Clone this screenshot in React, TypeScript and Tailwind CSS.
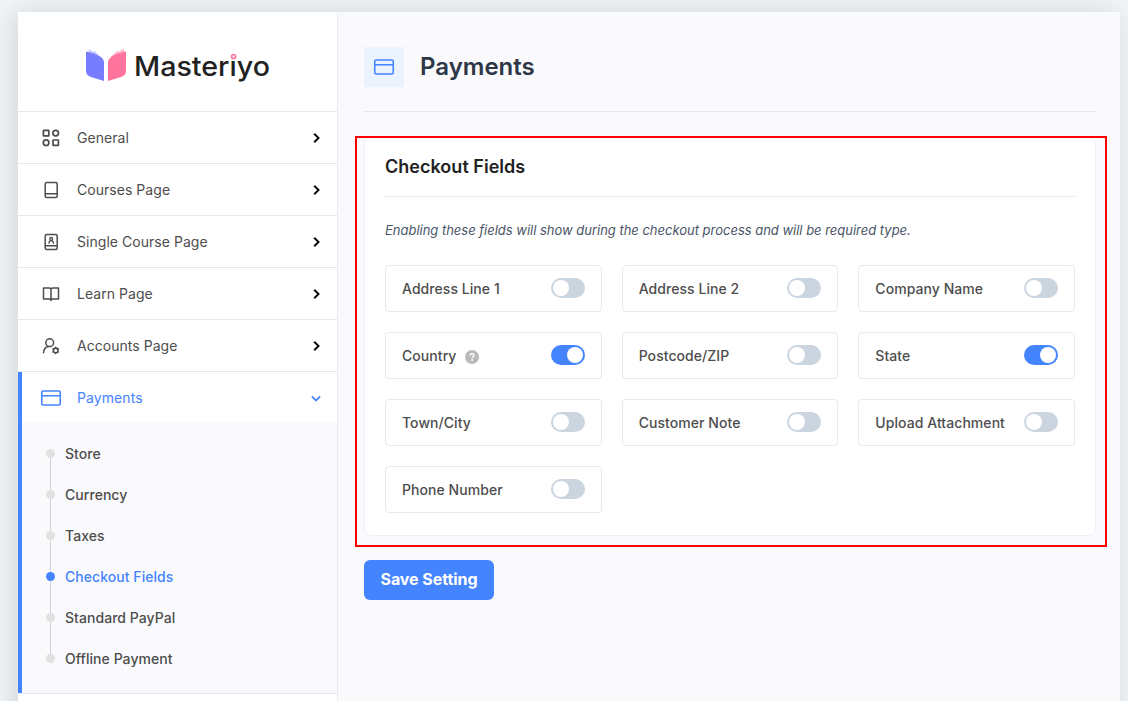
import React, { useState } from "react";

const stroke = {
  fill: "none",
  stroke: "currentColor",
  strokeLinecap: "round" as const,
  strokeLinejoin: "round" as const,
};

function GridIcon() {
  return (
    <svg width="20" height="20" viewBox="0 0 20 20" {...stroke} strokeWidth="1.7">
      <rect x="2.4" y="2.4" width="5.4" height="5.4" rx=".4" />
      <circle cx="14.7" cy="5.1" r="2.8" />
      <circle cx="5.1" cy="14.7" r="2.8" />
      <rect x="12" y="12" width="5.4" height="5.4" rx=".4" />
    </svg>
  );
}

function BookIcon() {
  return (
    <svg width="20" height="20" viewBox="0 0 20 20" {...stroke} strokeWidth="1.5">
      <rect x="4.2" y="2.6" width="12" height="14.8" rx="1.5" />
      <path d="M4.6 13.8H16" />
    </svg>
  );
}

function BookUserIcon() {
  return (
    <svg width="20" height="20" viewBox="0 0 20 20" {...stroke} strokeWidth="1.5">
      <rect x="4.2" y="2.6" width="12" height="14.8" rx="1.5" />
      <path d="M4.6 13.8H16" />
      <circle cx="10.2" cy="6.9" r="1.4" strokeWidth="1.3" />
      <path d="M7.9 11.2c.2-1.8 1-2.6 2.3-2.6s2.1.8 2.3 2.6" strokeWidth="1.3" />
    </svg>
  );
}

function OpenBookIcon() {
  return (
    <svg width="20" height="20" viewBox="0 0 20 20" {...stroke} strokeWidth="1.5">
      <path d="M2.5 4H8q2 0 2 1.500Q10 4 12 4h5.500v11H12q-2 0-2 1.400Q10 15 8 15H2.500zM10 5.500v11" />
    </svg>
  );
}

function UserCogIcon() {
  return (
    <svg width="20" height="20" viewBox="0 0 20 20" {...stroke} strokeWidth="1.5">
      <circle cx="8.7" cy="6.7" r="3.9" />
      <path d="M2.600 16.800c.2-3.600 2-5.800 5-6.200" />
      <circle cx="14.7" cy="14.4" r="2.3" strokeWidth="1.6" />
      <path
        d="M14.700 11.200v.5M14.700 17.100v.5M11.900 12.800l.4.2M17.100 15.800l.4.2M11.900 16l.4-.2M17.100 13l.4-.2"
        strokeWidth="1.3"
      />
    </svg>
  );
}

function CardIcon() {
  return (
    <svg width="22" height="18" viewBox="0 0 22 18" {...stroke} strokeWidth="1.6">
      <rect x="1.75" y="2" width="18.5" height="14" rx="1.5" />
      <path d="M2 6.800h18" />
    </svg>
  );
}

function ChevronRight() {
  return (
    <svg width="20" height="20" viewBox="0 0 24 24" fill="#000" stroke="#000" strokeWidth=".4">
      <path d="M10.707 17.707 16.414 12l-5.707-5.707-1.414 1.414L13.586 12l-4.293 4.293z" />
    </svg>
  );
}

function ChevronDown() {
  return (
    <svg width="20" height="20" viewBox="0 0 24 24" fill="currentColor">
      <path d="M16.293 9.293 12 13.586 7.707 9.293l-1.414 1.414L12 16.414l5.707-5.707z" />
    </svg>
  );
}

function HelpIcon() {
  return (
    <svg width="14" height="14" viewBox="0 0 14 14" className="ml-[9px] mt-0.5">
      <circle cx="7" cy="7" r="7" fill="#b9b9b9" />
      <path
        d="M5.100 5.600c0-1.100.8-1.800 1.900-1.800s1.900.7 1.900 1.700c0 1.200-1.700 1.300-1.700 2.600"
        fill="none"
        stroke="#fff"
        strokeWidth="1.5"
      />
      <circle cx="7.1" cy="10.1" r="1" fill="#fff" />
    </svg>
  );
}

function Logo() {
  return (
    <svg width="190" height="40" viewBox="0 0 190 40" role="img" aria-label="Masteriyo">
      <path d="M4 6.500 3.500 3 9 6.500 8.500 4 15 10.500V14z" fill="#c3c5ff" />
      <path d="M40 6.500 38.500 2.800 33 6.500 33.500 4 26 10.500V14z" fill="#ffb3cb" />
      <path d="M1 5.500Q10 7 15 10.500Q19 13 19 16.500V35L6 31Q1 29.300 1 25z" fill="#787cff" />
      <path d="M41 5.500Q33 7 27 10.500Q23 13 23 16.500V35L36 31Q41 29.300 41 25z" fill="#ff739c" />
      <text
        x="49"
        y="29.5"
        fontSize="27"
        fontWeight="500"
        fill="#222"
        textLength="136"
        lengthAdjust="spacingAndGlyphs"
        fontFamily="Inter, sans-serif"
      >
        Masterıyo
      </text>
      <circle cx="148.6" cy="10.5" r="2" fill="#fff" stroke="#ff739c" strokeWidth="1.7" />
    </svg>
  );
}

const menu = [
  { label: "General", icon: <GridIcon /> },
  { label: "Courses Page", icon: <BookIcon /> },
  { label: "Single Course Page", icon: <BookUserIcon /> },
  { label: "Learn Page", icon: <OpenBookIcon /> },
  { label: "Accounts Page", icon: <UserCogIcon /> },
];

const submenu = ["Store", "Currency", "Taxes", "Checkout Fields", "Standard PayPal", "Offline Payment"];

function Sidebar() {
  return (
    <aside className="flex w-80 shrink-0 flex-col border-r border-[#ebecf2] bg-white">
      <div className="flex h-[100px] items-center border-b border-[#e2e8f0] pl-[67px] pt-[9px]">
        <Logo />
      </div>
      {menu.map((item) => (
        <div
          key={item.label}
          className="flex h-[52px] items-center border-b border-[#e2e8f0] pl-[23px] pr-[11px] text-[#4d4d4d]"
        >
          {item.icon}
          <span className="ml-4 flex-1 text-sm leading-5 tracking-[0.04px]">{item.label}</span>
          <ChevronRight />
        </div>
      ))}
      <div className="h-[322px] border-b border-[#e2e8f0]">
        <div className="h-full border-l-4 border-[#4584ff]">
          <div className="flex h-[51px] items-center pl-[18px] pr-[11px] text-[#4584ff]">
            <CardIcon />
            <span className="ml-[15px] flex-1 text-sm leading-5 tracking-[0.08px]">Payments</span>
            <ChevronDown />
          </div>
          <ul className="h-[270px] bg-[#fafafc] pl-6 pt-[10px]">
            {submenu.map((label, i) => {
              const active = label === "Checkout Fields";
              return (
                <li key={label} className="flex h-[41px] items-center">
                  <div className="flex h-full w-[9px] flex-col items-center">
                    <span className={i === 0 ? "w-px flex-1" : "w-px flex-1 bg-[#cbd5e0]"} />
                    <span
                      className={
                        active ? "size-[9px] rounded-full bg-[#4584ff]" : "size-[9px] rounded-full bg-[#e1e1e1]"
                      }
                    />
                    <span className={i === submenu.length - 1 ? "w-px flex-1" : "w-px flex-1 bg-[#cbd5e0]"} />
                  </div>
                  <span
                    className={
                      active
                        ? "ml-[10px] text-sm font-[550] leading-5 tracking-[0.05px] text-[#4584ff]"
                        : "ml-[10px] text-sm font-[550] leading-5 tracking-[0.05px] text-[#4d4d4d]"
                    }
                  >
                    {label}
                  </span>
                </li>
              );
            })}
          </ul>
        </div>
      </div>
    </aside>
  );
}

const initialFields = [
  { label: "Address Line 1", on: false },
  { label: "Address Line 2", on: false },
  { label: "Company Name", on: false },
  { label: "Country", on: true, help: true },
  { label: "Postcode/ZIP", on: false },
  { label: "State", on: true },
  { label: "Town/City", on: false },
  { label: "Customer Note", on: false },
  { label: "Upload Attachment", on: false },
  { label: "Phone Number", on: false },
];

function Toggle({ on, label, onClick }: { on: boolean; label: string; onClick: () => void }) {
  return (
    <button
      role="switch"
      aria-checked={on}
      aria-label={label}
      onClick={onClick}
      className={
        on
          ? "mb-px flex h-5 w-[34px] shrink-0 justify-end rounded-full bg-[#4584ff] p-0.5"
          : "mb-px flex h-5 w-[34px] shrink-0 justify-start rounded-full bg-[#cbd5e0] p-0.5"
      }
    >
      <span className="size-4 rounded-full bg-white" />
    </button>
  );
}

export default function App() {
  const [fields, setFields] = useState(initialFields);
  const toggle = (label: string) =>
    setFields((all) => all.map((f) => (f.label === label ? { ...f, on: !f.on } : f)));

  return (
    <div className="h-[701px] overflow-hidden bg-[#f1f5f8] pl-[18px] pr-2 pt-3 font-['Inter',sans-serif]">
      <div className="flex h-[760px] bg-[#fafafc] shadow-[-4px_0_26px_rgba(0,0,0,0.13)]">
        <Sidebar />
        <main className="flex-1 pl-[26px] pr-6 pt-[35px]">
          <header className="flex h-[65px] items-start border-b border-[#e8e8ea]">
            <div className="flex size-10 items-center justify-center bg-[#ebf3ff] text-[#4584ff]">
              <CardIcon />
            </div>
            <h1 className="ml-4 text-2xl font-semibold leading-10 text-[#2d3748]">Payments</h1>
          </header>
          <section className="relative mt-[25px] h-[399px] rounded-lg border border-[#efeffa] bg-white px-5">
            <div className="pointer-events-none absolute -left-[10px] -right-[12px] -top-[2px] h-[411px] border-2 border-[#ff0000]" />
            <h2 className="h-[59px] border-b border-[#e8e8e8] pt-[15px] text-lg font-semibold leading-7 tracking-[0.02px] text-[#222]">
              Checkout Fields
            </h2>
            <p className="pt-[23px] text-[13px] italic leading-5 tracking-[-0.015px] text-[#4a5568]">
              Enabling these fields will show during the checkout process and will be required type.
            </p>
            <div className="mt-[25px] grid grid-cols-3 gap-5">
              {fields.map((f) => (
                <div
                  key={f.label}
                  className="flex h-[47px] items-center justify-between rounded border border-[#e9e9e9] px-4"
                >
                  <span className="flex items-center whitespace-nowrap pt-px text-sm font-[550] leading-5 tracking-[0.06px] text-[#4d4d4d]">
                    {f.label}
                    {f.help && <HelpIcon />}
                  </span>
                  <Toggle on={f.on} label={f.label} onClick={() => toggle(f.label)} />
                </div>
              ))}
            </div>
          </section>
          <button className="mt-6 h-10 w-[130px] rounded-md bg-[#4584ff] pb-0.5 text-base font-bold tracking-[-0.05px] text-white">
            Save Setting
          </button>
        </main>
      </div>
    </div>
  );
}
